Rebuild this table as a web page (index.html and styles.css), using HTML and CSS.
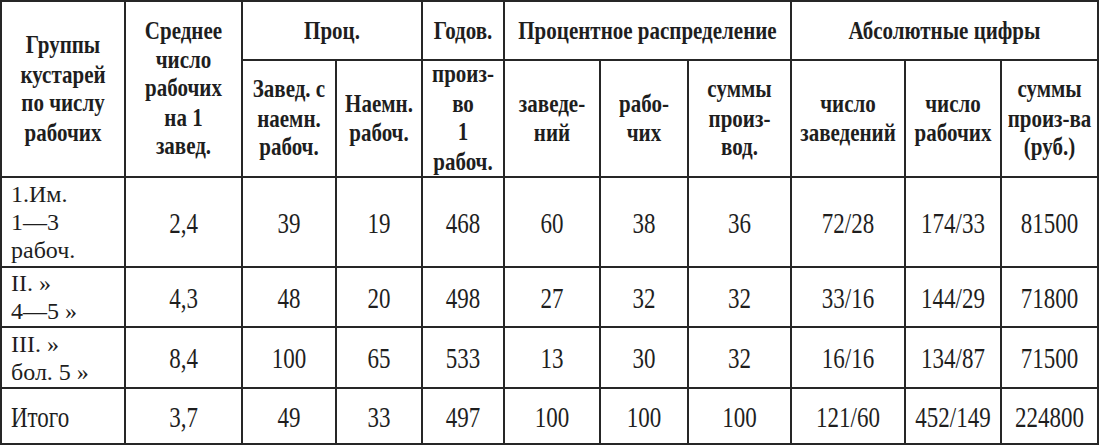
FILE: index.html
```html
<!DOCTYPE html>
<html lang="ru">
<head>
<meta charset="utf-8">
<title>Таблица кустарей</title>
<link rel="stylesheet" href="styles.css">
</head>
<body>
<table class="stat">
  <colgroup>
    <col class="c1"><col class="c2"><col class="c3"><col class="c4"><col class="c5"><col class="c6"><col class="c7"><col class="c8"><col class="c9"><col class="c10"><col class="c11">
  </colgroup>
  <thead>
    <tr class="h1">
      <th rowspan="2"><span class="t">Группы<br>кустарей<br>по числу<br>рабочих</span></th>
      <th rowspan="2"><span class="t">Среднее<br>число<br>рабочих<br>на 1<br>завед.</span></th>
      <th colspan="2"><span class="t">Проц.</span></th>
      <th><span class="t">Годов.</span></th>
      <th colspan="3"><span class="t">Процентное распределение</span></th>
      <th colspan="3"><span class="t">Абсолютные цифры</span></th>
    </tr>
    <tr class="h2">
      <th><span class="t">Завед. с<br>наемн.<br>рабоч.</span></th>
      <th><span class="t">Наемн.<br>рабоч.</span></th>
      <th><span class="t">произ-<br>во<br>1<br>рабоч.</span></th>
      <th><span class="t">заведе-<br>ний</span></th>
      <th><span class="t">рабо-<br>чих</span></th>
      <th><span class="t">суммы<br>произ-<br>вод.</span></th>
      <th><span class="t">число<br>заведений</span></th>
      <th><span class="t">число<br>рабочих</span></th>
      <th><span class="t">суммы<br>произ-ва<br>(руб.)</span></th>
    </tr>
  </thead>
  <tbody>
    <tr class="r1">
      <td class="grp"><span class="t">1.Им.<br>1—3<br>рабоч.</span></td>
      <td><span class="t">2,4</span></td><td><span class="t">39</span></td><td><span class="t">19</span></td><td><span class="t">468</span></td><td><span class="t">60</span></td><td><span class="t">38</span></td><td><span class="t">36</span></td><td><span class="t">72/28</span></td><td><span class="t">174/33</span></td><td><span class="t">81500</span></td>
    </tr>
    <tr class="r2">
      <td class="grp"><span class="t">II. »<br>4—5 »</span></td>
      <td><span class="t">4,3</span></td><td><span class="t">48</span></td><td><span class="t">20</span></td><td><span class="t">498</span></td><td><span class="t">27</span></td><td><span class="t">32</span></td><td><span class="t">32</span></td><td><span class="t">33/16</span></td><td><span class="t">144/29</span></td><td><span class="t">71800</span></td>
    </tr>
    <tr class="r3">
      <td class="grp"><span class="t">III. »<br>бол. 5 »</span></td>
      <td><span class="t">8,4</span></td><td><span class="t">100</span></td><td><span class="t">65</span></td><td><span class="t">533</span></td><td><span class="t">13</span></td><td><span class="t">30</span></td><td><span class="t">32</span></td><td><span class="t">16/16</span></td><td><span class="t">134/87</span></td><td><span class="t">71500</span></td>
    </tr>
    <tr class="r4">
      <td class="grp"><span class="t">Итого</span></td>
      <td><span class="t">3,7</span></td><td><span class="t">49</span></td><td><span class="t">33</span></td><td><span class="t">497</span></td><td><span class="t">100</span></td><td><span class="t">100</span></td><td><span class="t">100</span></td><td><span class="t">121/60</span></td><td><span class="t">452/149</span></td><td><span class="t">224800</span></td>
    </tr>
  </tbody>
</table>
</body>
</html>
```

FILE: styles.css
```css
html, body {
  margin: 0;
  padding: 0;
  background: #ffffff;
}

.stat {
  border-collapse: collapse;
  table-layout: fixed;
  width: 1099px;
  font-family: "Liberation Serif", "Times New Roman", serif;
  color: #1e1e1e;
}

.stat th,
.stat td {
  border: 2px solid #262626;
  padding: 0 2px;
  text-align: center;
  vertical-align: middle;
  white-space: nowrap;
  overflow: hidden;
}

.t {
  display: inline-block;
  vertical-align: middle;
  transform-origin: 50% 50%;
}

.stat th {
  font-weight: bold;
  font-size: 21px;
}

.stat th .t {
  line-height: 23.6px;
  transform: scaleY(1.23);
}

.stat td {
  font-weight: normal;
  font-size: 23px;
}

.stat td .t {
  line-height: 21.9px;
  transform: scaleY(1.28);
}

.stat td.grp {
  text-align: left;
  padding-left: 9px;
  font-size: 24px;
}

.stat td.grp .t {
  transform-origin: 0 50%;
  line-height: 28px;
  transform: none;
}

.stat .r4 td.grp {
  font-size: 23px;
}

.stat .r4 td.grp .t {
  line-height: 21.9px;
  transform: scaleY(1.28);
}

.c1 { width: 124px; }
.c2 { width: 117px; }
.c3 { width: 94px; }
.c4 { width: 86px; }
.c5 { width: 82px; }
.c6 { width: 96px; }
.c7 { width: 88px; }
.c8 { width: 103px; }
.c9 { width: 114px; }
.c10 { width: 96px; }
.c11 { width: 97px; }

.h1 { height: 59px; }
.h2 { height: 117px; }
.r1 { height: 90px; }
.r2 { height: 60px; }
.r3 { height: 61px; }
.r4 { height: 56px; }
```
